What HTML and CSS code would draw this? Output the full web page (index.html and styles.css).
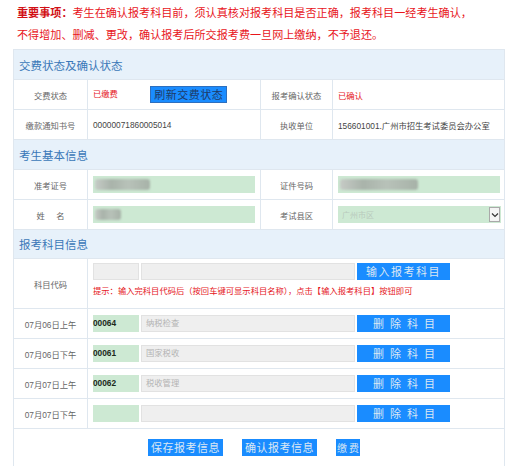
FILE: index.html
```html
<!DOCTYPE html>
<html lang="zh-CN">
<head>
    <meta charset="UTF-8">
    <meta name="viewport" content="width=device-width, initial-scale=1.0">
    <title>报考科目确认</title>
    <link rel="stylesheet" href="styles.css">
</head>
<body>

    <div class="notice">
        <b>重要事项：</b>考生在确认报考科目前，须认真核对报考科目是否正确，报考科目一经考生确认，<br>
        不得增加、删减、更改，确认报考后所交报考费一旦网上缴纳，不予退还。
    </div>

    <table class="info">
        <colgroup>
            <col class="c-label">
            <col class="c-value">
            <col class="c-label2">
            <col class="c-value2">
        </colgroup>

        <tr class="section"><td colspan="4">交费状态及确认状态</td></tr>
        <tr>
            <td class="label">交费状态</td>
            <td class="value">
                <span class="red">已缴费</span>
                <button class="btn btn-refresh">刷新交费状态</button>
            </td>
            <td class="label">报考确认状态</td>
            <td class="value"><span class="red">已确认</span></td>
        </tr>
        <tr>
            <td class="label">缴款通知书号</td>
            <td class="value">00000071860005014</td>
            <td class="label">执收单位</td>
            <td class="value">156601001.广州市招生考试委员会办公室</td>
        </tr>

        <tr class="section"><td colspan="4">考生基本信息</td></tr>
        <tr>
            <td class="label">准考证号</td>
            <td class="value">
                <div class="field"><span class="smudge s1"></span></div>
            </td>
            <td class="label">证件号码</td>
            <td class="value">
                <div class="field"><span class="smudge s2"></span></div>
            </td>
        </tr>
        <tr class="tall">
            <td class="label">姓&nbsp;&nbsp;&nbsp;&nbsp;&nbsp;名</td>
            <td class="value">
                <div class="field"><span class="smudge s3"></span></div>
            </td>
            <td class="label">考试县区</td>
            <td class="value">
                <div class="field select">
                    <span class="muted">广州市区</span>
                    <span class="arrow">
                        <svg width="8" height="6" viewBox="0 0 8 6"><path d="M1 1.5 L4 4.5 L7 1.5" fill="none" stroke="#333" stroke-width="1.2"/></svg>
                    </span>
                </div>
            </td>
        </tr>

        <tr class="section s3head"><td colspan="4">报考科目信息</td></tr>
        <tr class="code-row">
            <td class="label">科目代码</td>
            <td class="value" colspan="3">
                <div class="subject">
                    <div class="code gray"></div>
                    <div class="name"></div>
                    <button class="btn btn-add">输入报考科目</button>
                </div>
                <div class="hint">提示：输入完科目代码后（按回车键可显示科目名称），点击【输入报考科目】按钮即可</div>
            </td>
        </tr>
        <tr>
            <td class="label">07月06日上午</td>
            <td class="value" colspan="3">
                <div class="subject">
                    <div class="code">00064</div>
                    <div class="name">纳税检查</div>
                    <button class="btn btn-del">删除科目</button>
                </div>
            </td>
        </tr>
        <tr>
            <td class="label">07月06日下午</td>
            <td class="value" colspan="3">
                <div class="subject">
                    <div class="code">00061</div>
                    <div class="name">国家税收</div>
                    <button class="btn btn-del">删除科目</button>
                </div>
            </td>
        </tr>
        <tr>
            <td class="label">07月07日上午</td>
            <td class="value" colspan="3">
                <div class="subject">
                    <div class="code">00062</div>
                    <div class="name">税收管理</div>
                    <button class="btn btn-del">删除科目</button>
                </div>
            </td>
        </tr>
        <tr>
            <td class="label">07月07日下午</td>
            <td class="value" colspan="3">
                <div class="subject">
                    <div class="code"></div>
                    <div class="name"></div>
                    <button class="btn btn-del">删除科目</button>
                </div>
            </td>
        </tr>
        <tr class="actions">
            <td colspan="4">
                <div class="action-bar">
                    <button class="btn">保存报考信息</button>
                    <button class="btn">确认报考信息</button>
                    <button class="btn btn-pay">缴 费</button>
                </div>
            </td>
        </tr>
    </table>

</body>
</html>
```

FILE: styles.css
```css
body {
    margin: 0;
    background: #fff;
    font-family: "Liberation Sans", "Noto Sans CJK SC", sans-serif;
    color: #555;
}

.notice {
    padding: 2px 0 0 17px;
    height: 47px;
    font-size: 11.1px;
    line-height: 22px;
    color: #e8161c;
}

.notice b {
    color: #d10f14;
}

.info {
    margin-left: 13px;
    width: 491px;
    border-collapse: collapse;
    table-layout: fixed;
    font-size: 8.3px;
}

.c-label { width: 74px; }
.c-value { width: 173px; }
.c-label2 { width: 72px; }
.c-value2 { width: 172px; }

.info td {
    border: 1px solid #dfe7ef;
    height: 29px;
    padding: 0;
    vertical-align: middle;
    white-space: nowrap;
}

.section td {
    background: #e7f1fa;
    color: #3a78b8;
    font-size: 11.5px;
    padding-left: 5px;
}

.s3head td {
    height: 28px;
}

.label {
    text-align: center;
    color: #666;
}

.value {
    padding-left: 5px !important;
    color: #444;
}

.red {
    color: #e5161c;
}

.btn {
    background: #1a8cff;
    border: none;
    color: #dbe7f4;
    font-family: "Noto Sans CJK SC", sans-serif;
    font-size: 11px;
    letter-spacing: 0.5px;
    height: 17px;
    padding: 0 3px;
    line-height: 17px;
    white-space: nowrap;
    vertical-align: middle;
    cursor: pointer;
}

.btn-refresh {
    margin-left: 30px;
    width: 77px;
    padding: 0;
    color: #1e3a66;
    border: 1px solid #2d6fbe;
    line-height: 15px;
}

.btn-add {
    width: 93px;
    letter-spacing: 1.5px;
}

.btn-del {
    width: 93px;
    letter-spacing: 6px;
    padding-left: 10px;
}

.btn-pay {
    width: 24px;
    padding: 0;
    letter-spacing: 0;
    font-size: 10px;
}

.field {
    display: flex;
    align-items: center;
    width: 162px;
    height: 17px;
    background: #cde9d3;
}

.smudge {
    display: block;
    height: 11px;
    margin-left: 2px;
    background: linear-gradient(90deg, #c6cbc6, #a9b3aa 30%, #b8c2b9 60%, #a7b2a8);
    filter: blur(1.2px);
    border-radius: 3px;
}

.s1 { width: 55px; }
.s2 { width: 78px; }
.s3 { width: 26px; }

.select {
    width: 163px;
    justify-content: space-between;
}

.muted {
    color: #b9c9bd;
    padding-left: 4px;
    font-size: 8px;
}

.arrow {
    display: flex;
    align-items: center;
    justify-content: center;
    width: 11px;
    height: 15px;
    margin-right: 1px;
    background: #f4f4f4;
    border: 1px solid #a9a9a9;
    box-sizing: border-box;
}

.code-row td {
    height: 49px;
    vertical-align: top;
}

.code-row .label {
    vertical-align: middle;
}

.code-row .subject {
    margin-top: 4px;
}

.subject {
    display: flex;
    align-items: center;
}

.code {
    width: 46px;
    height: 17px;
    line-height: 17px;
    background: #cde9d3;
    color: #1b2a1b;
    font-weight: bold;
    font-size: 8.3px;
    box-sizing: border-box;
}

.code.gray {
    background: #efefef;
    border: 1px solid #e2e2e2;
}

.name {
    width: 214px;
    height: 17px;
    line-height: 15px;
    margin: 0 2px 0 2px;
    padding-left: 4px;
    background: #efefef;
    border: 1px solid #e2e2e2;
    color: #b3b3b3;
    box-sizing: border-box;
}

.hint {
    margin-top: 5px;
    color: #e5161c;
    font-size: 8.3px;
    line-height: 12px;
}

.actions td {
    height: 44px;
    vertical-align: top;
}

.action-bar {
    display: flex;
    justify-content: center;
    gap: 19px;
    padding: 10px 0 0 0;
    margin-left: -10px;
}
```
